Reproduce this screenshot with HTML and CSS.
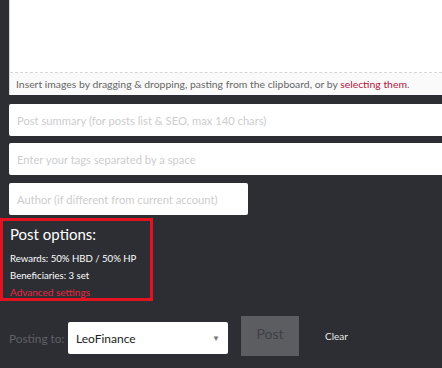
FILE: index.html
```html
<!DOCTYPE html>
<html>
<head>
<meta charset="utf-8">
<link rel="stylesheet" href="styles.css">
</head>
<body>
<div class="page">
  <div class="editor">
    <div class="editor-body"></div>
    <div class="editor-foot">Insert images by dragging &amp; dropping, pasting from the clipboard, or by <span class="link">selecting them</span>.</div>
  </div>
  <div class="field wide"><span class="ph">Post summary (for posts list &amp; SEO, max 140 chars)</span></div>
  <div class="field wide"><span class="ph">Enter your tags separated by a space</span></div>
  <div class="field author"><span class="ph">Author (if different from current account)</span></div>
  <div class="options">
    <div class="opt-title">Post options:</div>
    <div class="opt-line">Rewards: 50% HBD / 50% HP</div>
    <div class="opt-line">Beneficiaries: 3 set</div>
    <div class="opt-link">Advanced settings</div>
  </div>
  <div class="actions">
    <span class="posting">Posting to:</span>
    <div class="select"><span>LeoFinance</span><span class="caret">&#9660;</span></div>
    <div class="post-btn">Post</div>
    <span class="clear">Clear</span>
  </div>
</div>
</body>
</html>
```
FILE: styles.css
```css
html, body {
  margin: 0;
  padding: 0;
  background: #2c2e33;
  width: 442px;
  height: 368px;
  overflow: hidden;
  font-family: Lato, "Open Sans", sans-serif;
}
.page {
  display: flex;
  flex-direction: column;
  align-items: flex-start;
  padding-left: 9px;
  width: 442px;
  box-sizing: border-box;
  overflow: hidden;
}
.editor {
  align-self: stretch;
  background: #fff;
  border-left: 1px solid #d8d8d8;
  display: flex;
  flex-direction: column;
  margin-top: -2px;
}
.editor-body {
  height: 74px;
  border-bottom: 1px dashed #d6d6d6;
}
.editor-foot {
  background: #fafafa;
  height: 22px;
  box-sizing: border-box;
  padding: 5px 0 0 6px;
  font-size: 10.4px;
  color: #666;
  white-space: nowrap;
  line-height: 12px;
  overflow: hidden;
}
.link { color: #b8123a; }
.field {
  background: #fff;
  box-sizing: border-box;
  height: 32px;
  border-radius: 2px 0 0 2px;
  display: flex;
  align-items: center;
  padding-left: 8px;
  font-size: 11.2px;
  color: #cdcdcd;
  white-space: nowrap;
  overflow: hidden;
}
.wide { align-self: stretch; margin-top: 9px; }
.wide + .wide { margin-top: 7px; }
.author { width: 239px; margin-top: 8px; border-radius: 2px; }
.options {
  margin-left: -9px;
  margin-top: 3px;
  width: 153px;
  height: 83px;
  box-sizing: border-box;
  border: 3px solid #e3141f;
  padding: 3px 0 0 7px;
  color: #fff;
}
.opt-title { font-size: 15px; line-height: 20px; }
.opt-line { font-size: 9.6px; line-height: 17px; }
.opt-title + .opt-line { margin-top: 6px; }
.opt-link { font-size: 10px; line-height: 17px; color: #ea2640; }
.actions {
  display: flex;
  align-items: center;
  margin-top: 15px;
  height: 40px;
}
.posting { color: #5f6166; font-size: 11.8px; width: 59px; white-space: nowrap; padding-top: 4px; }
.select {
  width: 160px;
  height: 32px;
  margin-top: 4px;
  box-sizing: border-box;
  background: #fff;
  border-radius: 2px;
  display: flex;
  align-items: center;
  justify-content: space-between;
  padding: 0 8px;
  font-size: 12px;
  color: #222;
}
.caret { font-size: 8px; color: #777; }
.post-btn {
  margin-left: 13px;
  width: 58px;
  height: 40px;
  background: #5b5d61;
  color: #3e4045;
  font-size: 14px;
  display: flex;
  align-items: center;
  justify-content: center;
  padding-bottom: 6px;
  box-sizing: border-box;
}
.clear { margin-left: 26px; color: #e8e8e8; font-size: 10px; }
```
